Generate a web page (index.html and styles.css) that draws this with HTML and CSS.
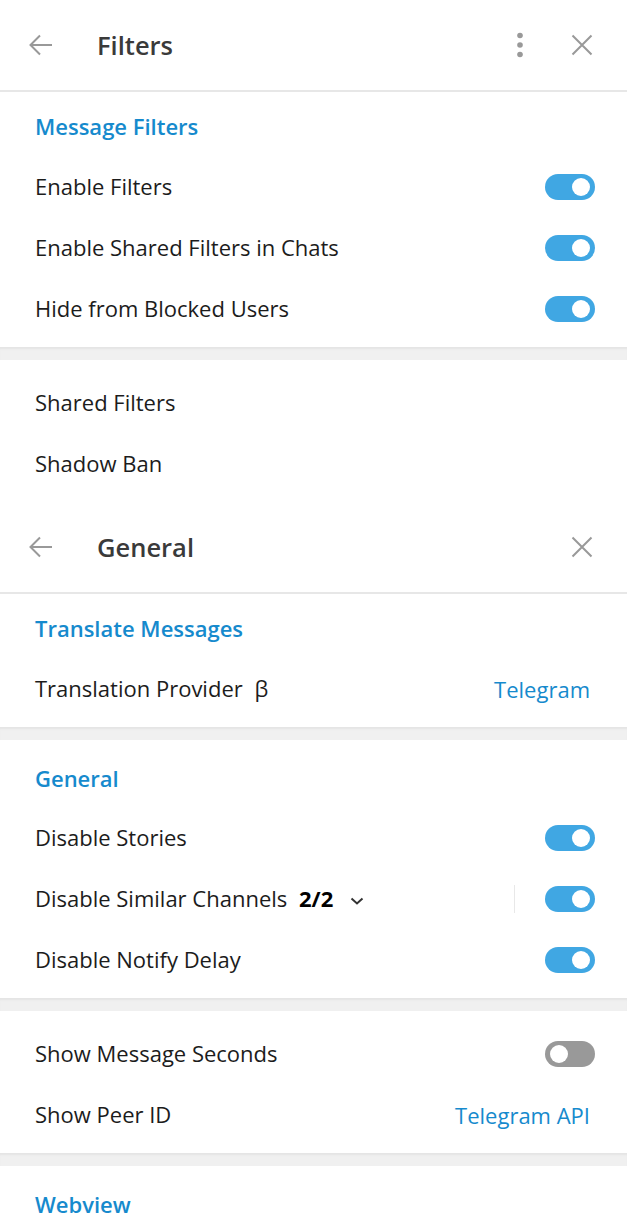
FILE: index.html
```html
<!DOCTYPE html>
<html lang="en">
<head>
  <meta charset="UTF-8" />
  <title>Settings</title>
  <link rel="stylesheet" href="styles.css">
</head>
<body>

  <div class="panel">
    <div class="topbar">
      <svg class="icon-btn" width="28" height="28" viewBox="0 0 28 28"><path d="M25 14H4M13 4.5L3.5 14 13 23.5" fill="none" stroke="#999" stroke-width="2"/></svg>
      <h1 class="topbar-title">Filters</h1>
      <svg class="dots" width="8" height="28" viewBox="0 0 8 28"><circle cx="4" cy="4.5" r="2.8" fill="#999"/><circle cx="4" cy="14" r="2.8" fill="#999"/><circle cx="4" cy="23.5" r="2.8" fill="#999"/></svg>
      <svg class="close" width="22" height="22" viewBox="0 0 22 22"><path d="M1.5 1.5l19 19M20.5 1.5l-19 19" fill="none" stroke="#999" stroke-width="2"/></svg>
    </div>

    <section class="block">
      <div class="block-title">Message Filters</div>
      <div class="row"><span>Enable Filters</span><span class="toggle on"></span></div>
      <div class="row"><span>Enable Shared Filters in Chats</span><span class="toggle on"></span></div>
      <div class="row"><span>Hide from Blocked Users</span><span class="toggle on"></span></div>
    </section>
    <div class="gap"></div>
    <section class="block">
      <div class="row"><span>Shared Filters</span></div>
      <div class="row"><span>Shadow Ban</span></div>
    </section>
  </div>

  <div class="panel">
    <div class="topbar">
      <svg class="icon-btn" width="28" height="28" viewBox="0 0 28 28"><path d="M25 14H4M13 4.5L3.5 14 13 23.5" fill="none" stroke="#999" stroke-width="2"/></svg>
      <h1 class="topbar-title">General</h1>
      <svg class="close" width="22" height="22" viewBox="0 0 22 22"><path d="M1.5 1.5l19 19M20.5 1.5l-19 19" fill="none" stroke="#999" stroke-width="2"/></svg>
    </div>

    <section class="block">
      <div class="block-title">Translate Messages</div>
      <div class="row"><span>Translation Provider <span class="beta">β</span></span><span class="value">Telegram</span></div>
    </section>
    <div class="gap"></div>
    <section class="block">
      <div class="block-title">General</div>
      <div class="row"><span>Disable Stories</span><span class="toggle on"></span></div>
      <div class="row">
        <span class="label-group">Disable Similar Channels <b class="count">2/2</b>
          <svg class="chevron" width="14" height="8" viewBox="0 0 14 8"><path d="M1.5 1.5L7 6.5l5.5-5" fill="none" stroke="#333" stroke-width="2"/></svg>
        </span>
        <span class="right-group"><span class="vline"></span><span class="toggle on"></span></span>
      </div>
      <div class="row"><span>Disable Notify Delay</span><span class="toggle on"></span></div>
    </section>
    <div class="gap"></div>
    <section class="block">
      <div class="row"><span>Show Message Seconds</span><span class="toggle"></span></div>
      <div class="row"><span>Show Peer ID</span><span class="value">Telegram API</span></div>
    </section>
    <div class="gap"></div>
    <section class="block">
      <div class="block-title">Webview</div>
    </section>
  </div>

</body>
</html>
```

FILE: styles.css
```css
body {
  margin: 0;
  background-color: #fff;
  font-family: "Open Sans", "Noto Sans", sans-serif;
  color: #1c1c1c;
  overflow: hidden;
}
.topbar {
  height: 90px;
  border-bottom: 2px solid #e7e7e7;
  display: flex;
  align-items: center;
  padding: 0 34px 0 27px;
}
.icon-btn {
  flex: none;
}
.topbar-title {
  margin: 0 0 0 42px;
  font-size: 25.5px;
  font-weight: 600;
  color: #3a3a3a;
  flex: 1;
}
.dots {
  margin-right: 47px;
}
.block {
  padding: 12px 0 8px;
  background: #fff;
}
.block-title {
  padding: 10px 35px 18px;
  line-height: 24px;
  font-size: 22px;
  font-weight: 600;
  color: #168acd;
}
.gap + .block > .block-title {
  padding-top: 14px;
  padding-bottom: 17px;
}
.row {
  height: 61px;
  display: flex;
  align-items: center;
  justify-content: space-between;
  padding: 0 32px 0 35px;
  font-size: 22px;
  line-height: 28px;
}
.row > span:first-child {
  margin-top: -2px;
}
.beta {
  margin-left: 6px;
}
.value {
  color: #168acd;
  margin-right: 5px;
}
.count {
  font-weight: 700;
  color: #000;
  margin-left: 6px;
}
.chevron {
  margin-left: 11px;
  vertical-align: middle;
}
.right-group {
  display: flex;
  align-items: center;
}
.vline {
  width: 1px;
  height: 28px;
  background: #e8e8e8;
  margin-right: 30px;
}
.toggle {
  position: relative;
  width: 50px;
  height: 26px;
  border-radius: 13px;
  background: #999;
}
.toggle::after {
  content: "";
  position: absolute;
  top: 4px;
  left: 5px;
  width: 18px;
  height: 18px;
  border-radius: 50%;
  background: #fff;
}
.toggle.on {
  background: #40a7e3;
}
.toggle.on::after {
  left: 27px;
}
.gap {
  height: 13px;
  background: #f0f0f0;
  box-shadow: inset 0 3px 2px -1px #e4e4e4;
}
```
